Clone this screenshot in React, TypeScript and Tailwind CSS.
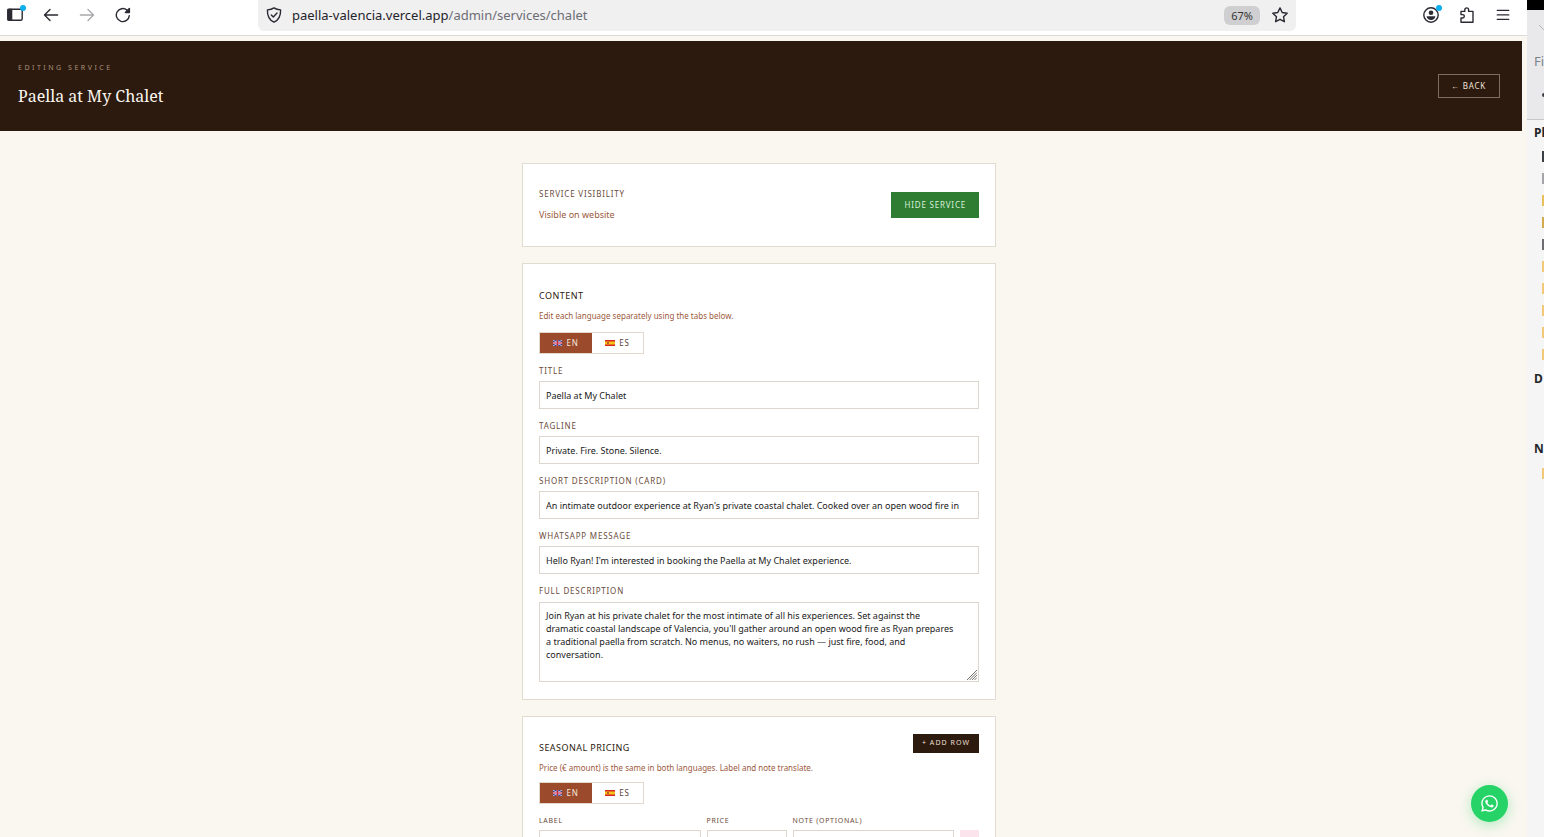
import React from 'react';
import { FaWhatsapp } from 'react-icons/fa';

const Dot = () => (
  <span className="absolute -right-[3px] -top-[2px] h-[6px] w-[6px] rounded-full bg-[#0cb0ee]" />
);

const iconProps = {
  width: 16,
  height: 16,
  viewBox: '0 0 16 16',
  fill: 'none',
  stroke: 'currentColor',
  strokeWidth: 1.4,
  strokeLinecap: 'round' as const,
  strokeLinejoin: 'round' as const,
};

const ToolButton = ({
  label,
  className = 'text-[#2b2a33]',
  dot = false,
  children,
}: {
  label: string;
  className?: string;
  dot?: boolean;
  children: React.ReactNode;
}) => (
  <button type="button" aria-label={label} className={`flex h-5 w-5 items-center justify-center ${className}`}>
    <span className="relative">
      <svg {...iconProps}>{children}</svg>
      {dot && <Dot />}
    </span>
  </button>
);

const BrowserBar = () => {
  return (
    <div className="flex h-9 items-start border-b border-[#dcdad6] bg-white pl-[5px] pr-[14px]">
      <div className="flex h-[30px] items-center gap-4">
        <ToolButton label="Sidebar" dot>
          <rect x="0.8" y="2.2" width="14.400" height="11" rx="1.500" />
          <path d="M1 2.500h3.600V13H1z" fill="currentColor" />
        </ToolButton>
        <ToolButton label="Back">
          <path d="M14.6 8H1.6M7 2.600 1.500 8 7 13.400" />
        </ToolButton>
        <ToolButton label="Forward" className="text-[#a9a9ad]">
          <path d="M1.400 8h13M9 2.600 14.500 8 9 13.400" />
        </ToolButton>
        <ToolButton label="Reload">
          <path d="M14.300 8.600A6.500 6.500 0 1 1 12 3.100l1.600 1.500" />
          <path d="M14.400 1.600v4h-4z" fill="currentColor" />
        </ToolButton>
      </div>
      <div className="mx-[125px] flex h-[31px] flex-1 items-center rounded-b-md bg-[#f0f0f1] px-[6px] pb-px">
        <ToolButton label="Site information">
          <path d="M8 0.900c2 1.400 4 1.800 6.600 2 .2 5.800-1.500 9.800-6.600 12.300C2.900 12.700 1.200 8.700 1.400 2.900 4 2.700 6 2.300 8 .9z" />
          <path d="M5.300 7.900l2 2 3.700-3.800" />
        </ToolButton>
        <p className="ml-2 flex-1 whitespace-nowrap pb-px font-['Noto_Sans',sans-serif] text-[13px] leading-5 text-[#6d6d74]">
          <span className="text-[#24232b]">paella-valencia.vercel.app</span>/admin/services/chalet
        </p>
        <button type="button" className="mr-[10px] h-[19px] w-9 rounded-md bg-[#cfcfd1] font-['Noto_Sans',sans-serif] text-[11px] leading-[19px] text-[#333]">
          67%
        </button>
        <ToolButton label="Bookmark">
          <path d="M8 .9l2.200 4.600 5 .7-3.700 3.500.9 5L8 12.300l-4.400 2.400.9-5L.8 6.200l5-.7z" />
        </ToolButton>
      </div>
      <div className="flex h-[30px] items-center gap-4">
        <ToolButton label="Account" dot>
          <circle cx="8" cy="8" r="7.200" />
          <circle cx="8" cy="5.800" r="2.300" fill="currentColor" stroke="none" />
          <path d="M3.600 9.200h8.800c-.2 2.400-2 3.800-4.400 3.800s-4.200-1.400-4.400-3.800z" fill="currentColor" stroke="none" />
        </ToolButton>
        <ToolButton label="Extensions">
          <path d="M2 15.200V11h1.600a1.700 1.700 0 0 0 0-3.400H2V4.400h3.800V2.800a1.900 1.900 0 0 1 3.800 0v1.600H14v10.800z" />
        </ToolButton>
        <ToolButton label="Menu">
          <path d="M2.300 3.400h11.400M2.300 7.900h11.400M2.300 12.400h11.400" />
        </ToolButton>
      </div>
    </div>
  );
};

const FlagUK = () => (
  <svg width="9" height="6" viewBox="0 0 18 12">
    <path d="M0 0h18v12H0z" fill="#2f4391" />
    <path d="M0 0l18 12M18 0L0 12" stroke="#d9c3dc" strokeWidth="2" />
    <path d="M9 0v12M0 6h18" stroke="#eccfdc" strokeWidth="3.600" />
    <path d="M9 0v12M0 6h18" stroke="#cf2f45" strokeWidth="2.400" />
  </svg>
);

const FlagSpain = () => (
  <svg width="10" height="6" viewBox="0 0 20 12">
    <path d="M0 0h20v12H0z" fill="#d3281f" />
    <path d="M0 3h20v6H0z" fill="#fcc21b" />
    <path d="M4 4h4v4H4z" fill="#b5622a" />
  </svg>
);

const LanguageTabs = () => (
  <div className="flex">
    <div className="flex h-[22px] border border-[#e2d9cc] text-[8px] tracking-widest">
      <button type="button" className="flex w-[52px] items-center justify-center gap-1 bg-[#9c4a2c] text-[#f7e6dc]">
        <FlagUK />
        EN
      </button>
      <button type="button" className="flex w-[51px] items-center justify-center gap-1 bg-white text-[#5c4033]">
        <FlagSpain />
        ES
      </button>
    </div>
  </div>
);

const fieldClass = 'block w-full border border-[#ddd6cc] bg-white pl-[6px] text-[#1a1a1a] outline-none';

const TextField = ({ id, label, value }: { id: string; label: string; value: string }) => (
  <div className="mt-[11px]">
    <label htmlFor={id} className="mb-1 block text-[8px] uppercase leading-3 tracking-widest text-[#6b4c3b]">
      {label}
    </label>
    <input id={id} type="text" defaultValue={value} className={`${fieldClass} h-7 pr-[6px] text-[9px]`} />
  </div>
);

const columnLabel = 'mb-[3px] block text-[7px] uppercase leading-3 tracking-widest text-[#6b4c3b]';

const fields = [
  { id: 'title', label: 'Title', value: 'Paella at My Chalet' },
  { id: 'tagline', label: 'Tagline', value: 'Private. Fire. Stone. Silence.' },
  {
    id: 'short',
    label: 'Short description (card)',
    value: "An intimate outdoor experience at Ryan's private coastal chalet. Cooked over an open wood fire in",
  },
  {
    id: 'whatsapp',
    label: 'WhatsApp message',
    value: "Hello Ryan! I'm interested in booking the Paella at My Chalet experience.",
  },
];

const description =
  "Join Ryan at his private chalet for the most intimate of all his experiences. Set against the dramatic coastal landscape of Valencia, you'll gather around an open wood fire as Ryan prepares a traditional paella from scratch. No menus, no waiters, no rush — just fire, food, and conversation.";

const cardClass = 'border border-[#e2dbd0] bg-white px-4';

const ServiceEditor = () => {
  return (
    <div className="pr-[5px] pt-[5px] font-['Noto_Sans',sans-serif]">
      <header className="flex h-[90px] items-center justify-between bg-[#2c1a0e] pl-[18px] pr-[22px]">
        <div className="pb-[2px]">
          <p className="text-[7px] uppercase leading-3 tracking-[0.36em] text-[#a8917c]">Editing service</p>
          <h1 className="mt-[10px] font-['Noto_Serif','DejaVu_Serif',serif] text-[16px] leading-6 text-[#faf6ee]">
            Paella at My Chalet
          </h1>
        </div>
        <a href="#back" className="border border-[#7d6c5f] pl-3 pr-[13px] text-[8px] leading-[22px] tracking-widest text-[#f0e4d8]">
          ← BACK
        </a>
      </header>

      <main className="pr-1 pt-8">
        <div className="mx-auto flex max-w-[474px] flex-col gap-4">
          <section className={`${cardClass} flex h-[84px] items-center justify-between`}>
            <div className="pb-[2px]">
              <h2 className="text-[8px] uppercase leading-3 tracking-widest text-[#6b4c3b]">Service visibility</h2>
              <p className="mt-[9px] text-[9px] leading-3 text-[#9c5a40]">Visible on website</p>
            </div>
            <button type="button" className="h-[26px] bg-[#2e7d32] pl-[14px] pr-[13px] text-[8px] uppercase tracking-widest text-[#d9f0da]">
              Hide service
            </button>
          </section>

          <section className={`${cardClass} pb-[17px] pt-[26px]`}>
            <h2 className="text-[9px] uppercase leading-3 tracking-wider text-[#2c1a0e]">Content</h2>
            <p className="mb-[10px] mt-2 text-[8px] leading-3 text-[#9c5a40]">Edit each language separately using the tabs below.</p>
            <LanguageTabs />
            {fields.map((field) => (
              <TextField key={field.id} {...field} />
            ))}
            <div className="mt-[11px]">
              <label htmlFor="full" className="mb-[5px] block text-[8px] uppercase leading-3 tracking-widest text-[#6b4c3b]">
                Full description
              </label>
              <div className="relative">
                <textarea
                  id="full"
                  defaultValue={description}
                  className={`${fieldClass} h-20 resize-none overflow-hidden py-[6px] pr-[21px] text-[9px] leading-[13px]`}
                />
                <svg className="absolute bottom-[2px] right-[2px]" width="10" height="10" viewBox="0 0 10 10" stroke="#77736e">
                  <path d="M0 10L10 0M2.500 10L10 2.500M5 10l5-5M7.500 10L10 7.500" />
                </svg>
              </div>
            </div>
          </section>

          <section className={`${cardClass} pb-4 pt-[17px]`}>
            <div className="flex items-start justify-between">
              <div className="pt-2">
                <h2 className="text-[9px] uppercase leading-3 tracking-wider text-[#2c1a0e]">Seasonal pricing</h2>
                <p className="mb-2 mt-2 text-[8px] leading-3 text-[#9c5a40]">
                  Price (€ amount) is the same in both languages. Label and note translate.
                </p>
              </div>
              <button type="button" className="h-[19px] bg-[#2c1a0e] px-[9px] text-[7px] uppercase tracking-[0.15em] text-[#ecdfd0]">
                + Add row
              </button>
            </div>
            <LanguageTabs />
            <div className="mt-[11px] grid grid-cols-[1fr_80px_1fr_19px] items-end gap-[6px]">
              <div>
                <label htmlFor="row-label" className={columnLabel}>Label</label>
                <input id="row-label" type="text" className={`${fieldClass} h-7 text-[9px]`} />
              </div>
              <div>
                <label htmlFor="row-price" className={columnLabel}>Price</label>
                <input id="row-price" type="text" className={`${fieldClass} h-7 text-[9px]`} />
              </div>
              <div>
                <label htmlFor="row-note" className={columnLabel}>Note (optional)</label>
                <input id="row-note" type="text" className={`${fieldClass} h-7 text-[9px]`} />
              </div>
              <button type="button" aria-label="Remove row" className="h-7 bg-[#fce4ec]" />
            </div>
          </section>
        </div>
      </main>
    </div>
  );
};

const places = [
  { id: 'recent', color: 'bg-[#3a3f45]' },
  { id: 'home', color: 'bg-[#a3a5a8]' },
  { id: 'desktop', color: 'bg-[#e9bf5c]' },
  { id: 'starred', color: 'bg-[#d3ab4e]' },
  { id: 'trash', color: 'bg-[#6c6e72]' },
  { id: 'folder-1', color: 'bg-[#f2c879]' },
  { id: 'folder-2', color: 'bg-[#f2c879]' },
  { id: 'folder-3', color: 'bg-[#f2c879]' },
  { id: 'folder-4', color: 'bg-[#f2c879]' },
  { id: 'folder-5', color: 'bg-[#f2c879]' },
];

const FilesWindow = () => {
  return (
    <aside className="flex w-[17px] shrink-0 flex-col overflow-hidden bg-[#f5f5f5] font-['Noto_Sans',sans-serif] text-[13px] text-[#232629]">
      <div className="h-[10px] bg-black" />
      <div className="h-[110px] border-b border-[#c4c5c7] bg-[#e9e9eb] pt-[13px]">
        <svg className="ml-auto" width="5" height="10" viewBox="0 0 5 10" fill="none" stroke="#b5b6b9">
          <path d="M0 2l5 5" />
        </svg>
        <p className="mt-[18px] pl-[7px] leading-5 text-[#7a828a]">Fi</p>
        <div className="ml-auto mt-[22px] h-1 w-[2px] rounded-l-full bg-[#3a3f45]" />
      </div>
      <p className="mt-[3px] pl-[7px] text-[12px] font-bold leading-5">Pl</p>
      <ul className="mt-[2px]">
        {places.map((place) => (
          <li key={place.id} className="flex h-[22px] items-center justify-end">
            <span className={`h-[11px] w-[2px] ${place.color}`} />
          </li>
        ))}
      </ul>
      <p className="mt-1 pl-[7px] text-[12px] font-bold leading-5">D</p>
      <p className="mt-[50px] pl-[7px] text-[12px] font-bold leading-5">N</p>
      <div className="ml-auto mt-[9px] h-[11px] w-[2px] bg-[#f2c879]" />
    </aside>
  );
};

const App = () => {
  return (
    <div className="flex h-screen overflow-hidden bg-[#faf7f0]">
      <div className="relative flex min-w-0 flex-1 flex-col">
        <BrowserBar />
        <div className="min-h-0 flex-1 overflow-hidden">
          <ServiceEditor />
        </div>
        <a
          href="#whatsapp"
          aria-label="WhatsApp"
          className="absolute bottom-[15px] right-[19px] flex h-[37px] w-[37px] items-center justify-center rounded-full bg-[#25d366] text-white shadow-[0_3px_13px_rgba(37,211,102,0.35)]"
        >
          <FaWhatsapp size={19} />
        </a>
      </div>
      <FilesWindow />
    </div>
  );
};

export default App;
